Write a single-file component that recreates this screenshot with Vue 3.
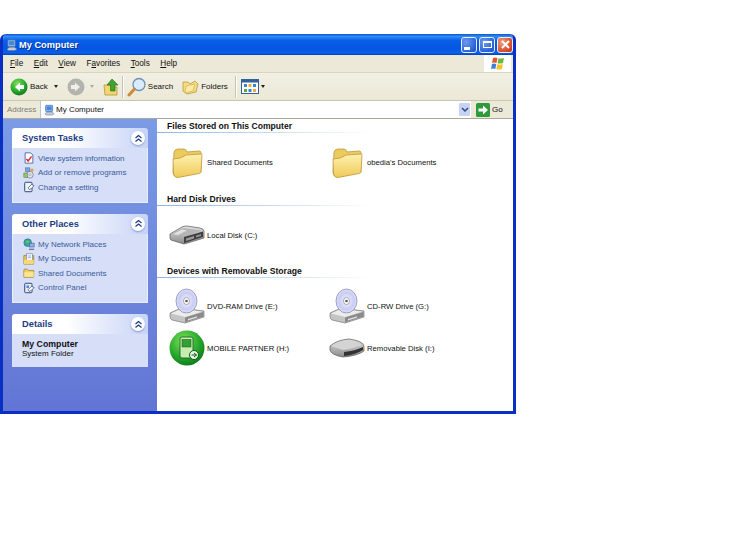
<template>
  <div class="page">
    <svg class="sprite" width="0" height="0">
      <defs>
        <linearGradient id="gFolder" x1="0" y1="0" x2="0" y2="1"><stop offset="0" stop-color="#fdf1ae" /><stop offset="1" stop-color="#f0ca58" /></linearGradient>
        <linearGradient id="gDrive" x1="0" y1="0" x2="0" y2="1"><stop offset="0" stop-color="#e2e2e2" /><stop offset="1" stop-color="#8a8a8a" /></linearGradient>
        <radialGradient id="gGreen" cx="0.4" cy="0.3" r="0.8"><stop offset="0" stop-color="#7fe05a" /><stop offset="0.6" stop-color="#22a52a" /><stop offset="1" stop-color="#0b6b1a" /></radialGradient>
        <radialGradient id="gDisc" cx="0.5" cy="0.5" r="0.6"><stop offset="0" stop-color="#f4f4ff" /><stop offset="0.6" stop-color="#c9ccf2" /><stop offset="1" stop-color="#eef0ff" /></radialGradient>

        <symbol id="i-folder" viewBox="0 0 36 36">
          <path d="M5 8 Q6 5 9 5 L15 5 Q17 5 18 8 L30 7 Q32 7 32 9 L32 28 L9 33 Q4 33 4 28 Z" fill="#ecca5c" stroke="#b5983c" stroke-width="0.8" />
          <path d="M4 15 Q12 15 17 11 L32.500 10 Q33 10 33 11 L32 28 Q32 29 30 29.500 L9 33.500 Q5 33.500 4.500 29 Z" fill="url(#gFolder)" stroke="#bd9c40" stroke-width="0.8" />
        </symbol>

        <symbol id="i-hdd" viewBox="0 0 36 20">
          <path d="M1 9 L13 2 Q15 1 18 1 L31 3 Q35 4 35 6 L35 13 L15 19 L2 15 Q1 14 1 12 Z" fill="url(#gDrive)" stroke="#555" stroke-width="0.7" />
          <path d="M2 9 L14 3 L33 5.500 L15 11.500 Z" fill="#b5b5b5" />
          <path d="M4 9 L13 4.500 L18 5.500 L9 10 Z" fill="#e0e0e0" />
          <path d="M15 12 L34 6.500 L34 12 L15 18 Z" fill="#3f3f3f" />
          <path d="M17 13.500 L25 11 L25 13.500 L17 16 Z" fill="#9a9a9a" />
          <path d="M27 10.500 L32 9 L32 11 L27 12.500 Z" fill="#8f8f8f" />
        </symbol>

        <symbol id="i-cd" viewBox="0 0 36 36">
          <path d="M1 25 L12 20 L35 23 L35 29 L16 35 L3 32 Q1 31 1 28 Z" fill="#c4c4c4" stroke="#666" stroke-width="0.6" />
          <path d="M2 25.500 L12 21 L33 23.500 L16 29 Z" fill="#ececec" />
          <path d="M16 29.500 L34.500 24 L34.500 28.500 L16 34.500 Z" fill="#8a8a8a" />
          <path d="M19 31 L28 28.300 L28 29.800 L19 32.500 Z" fill="#dcdcdc" />
          <ellipse cx="17.500" cy="13" rx="10.500" ry="12" fill="url(#gDisc)" stroke="#7f80a8" stroke-width="0.7" />
          <ellipse cx="17.500" cy="13" rx="3" ry="3.500" fill="#fff" stroke="#777" stroke-width="0.6" />
          <circle cx="17.500" cy="13" r="1.300" fill="#555" />
        </symbol>

        <symbol id="i-mobile" viewBox="0 0 36 36">
          <circle cx="18" cy="18" r="17.500" fill="url(#gGreen)" />
          <rect x="11" y="7" width="13" height="21" rx="2" fill="#c6ecb0" stroke="#0d5a18" stroke-width="0.8" />
          <rect x="13" y="9.500" width="9" height="7.500" fill="#32a032" stroke="#0d5a18" stroke-width="0.5" />
          <circle cx="25" cy="25" r="4.500" fill="#e9f8e0" stroke="#0d5a18" />
          <path d="M22.500 25 h5 M25 23 l2.500 2 l-2.500 2" fill="none" stroke="#0d5a18" />
        </symbol>

        <symbol id="i-removable" viewBox="0 0 36 20">
          <path d="M1 8 Q8 2 20 1 Q34 3 35 8 L35 13 Q28 18 14 19 Q2 17 1 12 Z" fill="url(#gDrive)" stroke="#555" stroke-width="0.7" />
          <path d="M2 8 Q8 3 20 2 L33 7 Q22 11 14 12 Z" fill="#d4d4d4" />
          <path d="M15 14 Q26 13 34 9 L34 12 Q26 17 15 18 Z" fill="#333" />
        </symbol>

        <symbol id="i-computer" viewBox="0 0 14 14">
          <rect x="2" y="1" width="9" height="8" rx="1" fill="#8fb2e8" stroke="#3d5f9c" stroke-width="0.8" />
          <rect x="3.500" y="2.500" width="6" height="4.500" fill="#3f8ae0" />
          <path d="M1 12 L4 9.500 H10 L13 12 L10 13.500 H3 Z" fill="#c3cbd8" stroke="#5d6f8c" stroke-width="0.6" />
        </symbol>

        <symbol id="i-sysinfo" viewBox="0 0 14 14">
          <path d="M2.500 1 H9 L11.500 3.500 V13 H2.500 Z" fill="#fff" stroke="#44609c" />
          <path d="M4 8 L6 10.500 L10 5" fill="none" stroke="#d8262c" stroke-width="1.600" />
        </symbol>

        <symbol id="i-addremove" viewBox="0 0 14 14">
          <circle cx="8" cy="9" r="4" fill="#dfe4ef" stroke="#667" stroke-width="0.7" />
          <circle cx="8" cy="9" r="1.200" fill="#fff" stroke="#667" stroke-width="0.5" />
          <rect x="3" y="1" width="5" height="4" fill="#77a8e0" stroke="#44609c" stroke-width="0.6" />
          <rect x="1" y="7" width="4" height="5" fill="#9ac467" stroke="#4d7a2c" stroke-width="0.6" />
          <circle cx="10.500" cy="3.500" r="1.800" fill="#e0a040" />
        </symbol>

        <symbol id="i-setting" viewBox="0 0 14 14">
          <rect x="2" y="1.500" width="8.500" height="11" rx="1" fill="#eef2fa" stroke="#27406f" stroke-width="1.100" />
          <path d="M6 8 L10 4 L13 5.500 L10 8.500 L7.500 10 Z" fill="#fff" stroke="#27406f" stroke-width="0.8" />
        </symbol>

        <symbol id="i-network" viewBox="0 0 14 14">
          <circle cx="5.500" cy="5.500" r="4.500" fill="#36a7a0" stroke="#1d5f7c" stroke-width="0.6" />
          <path d="M3 3.500 Q6 2 8 5 Q5 8 3 3.500" fill="#6cc45c" />
          <rect x="7.500" y="6" width="5.500" height="4.500" fill="#8fb2e8" stroke="#3d5f9c" stroke-width="0.7" />
          <path d="M7 13 H13" stroke="#556" stroke-width="1.200" />
        </symbol>

        <symbol id="i-mydocs" viewBox="0 0 14 14">
          <path d="M1 3 H12.500 V13 H1 Z" fill="#eec75e" stroke="#8f7428" stroke-width="0.8" />
          <rect x="4" y="1" width="7" height="9" fill="#fff" stroke="#5f7aa8" stroke-width="0.7" />
          <path d="M5.500 3.500 H9.500 M5.500 5.500 H9.500" stroke="#5f7aa8" stroke-width="0.7" />
          <path d="M1 8 H12.500 V13 H1 Z" fill="#f4d878" />
        </symbol>

        <symbol id="i-shared" viewBox="0 0 14 14">
          <path d="M1 4 L1.500 2.500 H5 L6.500 4 H12.500 V12 H1 Z" fill="#f2cf60" stroke="#96782c" stroke-width="0.8" />
          <path d="M1.500 6 H12.500 V11.500 H1.500 Z" fill="#fbe58e" />
        </symbol>

        <symbol id="i-control" viewBox="0 0 14 14">
          <rect x="2" y="1.500" width="8.500" height="11" rx="1" fill="#e6ecf8" stroke="#27406f" stroke-width="1.100" />
          <rect x="4" y="4" width="3" height="3" fill="#5b88c8" />
          <path d="M6 9 L10 5 L13 6.500 L10 9.500 L7.500 11 Z" fill="#fff" stroke="#27406f" stroke-width="0.8" />
        </symbol>
      </defs>
    </svg>

    <div class="window">
      <div class="titlebar">
        <svg class="title-icon"><use href="#i-computer" /></svg>
        <span class="title-text">My Computer</span>
        <div class="title-btns">
          <button class="win-btn"><span class="min-mark"></span></button>
          <button class="win-btn"><span class="max-mark"></span></button>
          <button class="win-btn close-btn">
            <svg width="11" height="11" viewBox="0 0 11 11"><path d="M2 2 L9 9 M9 2 L2 9" stroke="#fff" stroke-width="2" /></svg>
          </button>
        </div>
      </div>

      <div class="menubar">
        <div class="menus">
          <span v-for="m in menus" :key="m.pre + m.key + m.post">{{ m.pre }}<u>{{ m.key }}</u>{{ m.post }}</span>
        </div>
        <div class="flag-box">
          <svg width="16" height="16" viewBox="0 0 16 16">
            <path d="M3 2 Q5 1 7.500 2 L6.500 7 Q4 6 2 7 Z" fill="#e8562c" />
            <path d="M8.500 2.300 Q11 3 14 2 L13 7 Q10 8 7.500 7.300 Z" fill="#6cb83a" />
            <path d="M2 8 Q4 7 6.300 8 L5.300 13 Q3 12 1 13 Z" fill="#3f7fdc" />
            <path d="M7.300 8.300 Q10 9 12.800 8 L12 13 Q9 14 6.300 13.300 Z" fill="#f4c22e" />
          </svg>
        </div>
      </div>

      <div class="toolbar">
        <svg class="nav-icon" viewBox="0 0 18 18">
          <circle cx="9" cy="9" r="8.500" fill="url(#gGreen)" />
          <path d="M10 4.500 L5 9 L10 13.500 V11 H14 V7 H10 Z" fill="#fff" />
        </svg>
        <span class="tool-label back-label">Back</span>
        <span class="caret back-caret"></span>
        <svg class="nav-icon forward-icon" viewBox="0 0 18 18">
          <circle cx="9" cy="9" r="8.500" fill="#b4b4ae" />
          <path d="M8 4.500 L13 9 L8 13.500 V11 H4 V7 H8 Z" fill="#f0f0ea" />
        </svg>
        <span class="caret gray-caret"></span>
        <svg class="up-icon" viewBox="0 0 16 18">
          <path d="M1 7 H6 L8 9 H14 V17 H2 Z" fill="#f4d76c" stroke="#a88b32" stroke-width="0.7" />
          <path d="M9 1 L15 7 H12 V13 H7.500 V7 H4 Z" fill="#3fa52e" stroke="#1c6a1a" stroke-width="0.6" />
        </svg>
        <span class="tool-sep first-sep"></span>
        <svg class="search-icon" viewBox="0 0 20 20">
          <circle cx="12" cy="7.500" r="6" fill="#d8ecfb" stroke="#6e8fb4" stroke-width="1.300" />
          <path d="M7.500 12 L2 18" stroke="#c98a3c" stroke-width="3" stroke-linecap="round" />
        </svg>
        <span class="tool-label search-label">Search</span>
        <svg class="folders-icon" viewBox="0 0 17 17">
          <path d="M1 4 H6 L8 6 L13 3 L16 6 L14 14 L5 16 L1 13 Z" fill="#f6dc7e" stroke="#b99a3c" stroke-width="0.8" />
          <path d="M4 8 L13 6 L11 13 L3 15 Z" fill="#fbeaa6" stroke="#c8a848" stroke-width="0.6" />
        </svg>
        <span class="tool-label folders-label">Folders</span>
        <span class="tool-sep"></span>
        <svg class="views-icon" viewBox="0 0 18 15">
          <rect x="0.500" y="0.500" width="17" height="14" fill="#fff" stroke="#33609e" />
          <rect x="0.500" y="0.500" width="17" height="3" fill="#33609e" />
          <rect x="3" y="5" width="3" height="3" fill="#3b82d6" />
          <rect x="7.500" y="5" width="3" height="3" fill="#e8b02e" />
          <rect x="12" y="5" width="3" height="3" fill="#3b82d6" />
          <rect x="3" y="10" width="3" height="3" fill="#58a83a" />
          <rect x="7.500" y="10" width="3" height="3" fill="#3b82d6" />
          <rect x="12" y="10" width="3" height="3" fill="#e8b02e" />
        </svg>
        <span class="caret views-caret"></span>
      </div>

      <div class="addressbar">
        <span class="addr-label">Address</span>
        <div class="addr-input">
          <svg class="addr-icon"><use href="#i-computer" /></svg>
          <span>My Computer</span>
          <span class="addr-drop">
            <svg width="8" height="6" viewBox="0 0 8 6"><path d="M1 1 L4 4 L7 1" fill="none" stroke="#2d4a80" stroke-width="1.500" /></svg>
          </span>
        </div>
        <svg class="go-icon" viewBox="0 0 14 14">
          <rect width="14" height="14" rx="1.500" fill="#2f9a3c" />
          <path d="M2.500 5.500 H7 V2.500 L12 7 L7 11.500 V8.500 H2.500 Z" fill="#fff" />
        </svg>
        <span class="go-label">Go</span>
      </div>

      <div class="content">
        <aside class="sidebar">
          <section v-for="panel in linkPanels" :key="panel.title" class="panel">
            <header class="panel-head">
              <span>{{ panel.title }}</span>
              <span class="chevron">
                <svg width="9" height="9" viewBox="0 0 9 9"><path d="M1.500 4 L4.500 1.500 L7.500 4 M1.500 7.500 L4.500 5 L7.500 7.500" fill="none" stroke="#1c3c85" stroke-width="1.200" /></svg>
              </span>
            </header>
            <ul class="panel-links">
              <li v-for="link in panel.links" :key="link.label">
                <svg class="link-icon"><use :href="'#' + link.icon" /></svg>
                <span>{{ link.label }}</span>
              </li>
            </ul>
          </section>
          <section class="panel">
            <header class="panel-head">
              <span>Details</span>
              <span class="chevron">
                <svg width="9" height="9" viewBox="0 0 9 9"><path d="M1.500 4 L4.500 1.500 L7.500 4 M1.500 7.500 L4.500 5 L7.500 7.500" fill="none" stroke="#1c3c85" stroke-width="1.200" /></svg>
              </span>
            </header>
            <div class="details-body">
              <strong>My Computer</strong>
              <span>System Folder</span>
            </div>
          </section>
        </aside>

        <main class="files">
          <section v-for="group in groups" :key="group.title" class="group">
            <h3 class="group-title">{{ group.title }}</h3>
            <div class="tiles">
              <div v-for="tile in group.tiles" :key="tile.label" class="tile">
                <span class="tile-icon">
                  <svg :width="tile.w" :height="tile.h"><use :href="'#' + tile.icon" /></svg>
                </span>
                <span>{{ tile.label }}</span>
              </div>
            </div>
          </section>
        </main>
      </div>
    </div>
  </div>
</template>

<script setup>
const menus = [
  { pre: '', key: 'F', post: 'ile' },
  { pre: '', key: 'E', post: 'dit' },
  { pre: '', key: 'V', post: 'iew' },
  { pre: 'F', key: 'a', post: 'vorites' },
  { pre: '', key: 'T', post: 'ools' },
  { pre: '', key: 'H', post: 'elp' }
]

const linkPanels = [
  {
    title: 'System Tasks',
    links: [
      { icon: 'i-sysinfo', label: 'View system information' },
      { icon: 'i-addremove', label: 'Add or remove programs' },
      { icon: 'i-setting', label: 'Change a setting' }
    ]
  },
  {
    title: 'Other Places',
    links: [
      { icon: 'i-network', label: 'My Network Places' },
      { icon: 'i-mydocs', label: 'My Documents' },
      { icon: 'i-shared', label: 'Shared Documents' },
      { icon: 'i-control', label: 'Control Panel' }
    ]
  }
]

const groups = [
  {
    title: 'Files Stored on This Computer',
    tiles: [
      { icon: 'i-folder', label: 'Shared Documents', w: 36, h: 36 },
      { icon: 'i-folder', label: "obedia's Documents", w: 36, h: 36 }
    ]
  },
  {
    title: 'Hard Disk Drives',
    tiles: [{ icon: 'i-hdd', label: 'Local Disk (C:)', w: 36, h: 20 }]
  },
  {
    title: 'Devices with Removable Storage',
    tiles: [
      { icon: 'i-cd', label: 'DVD-RAM Drive (E:)', w: 36, h: 36 },
      { icon: 'i-cd', label: 'CD-RW Drive (G:)', w: 36, h: 36 },
      { icon: 'i-mobile', label: 'MOBILE PARTNER (H:)', w: 36, h: 36 },
      { icon: 'i-removable', label: 'Removable Disk (I:)', w: 36, h: 20 }
    ]
  }
]
</script>

<style>
html, body {
  margin: 0;
  background: #fff;
}
</style>

<style scoped>
.page {
  width: 750px;
  height: 552px;
  padding-top: 34px;
  box-sizing: border-box;
  background: #fff;
  font-family: "Liberation Sans", Arial, sans-serif;
  font-size: 8px;
  color: #111;
  overflow: hidden;
}
.sprite {
  position: absolute;
}
.window {
  width: 516px;
  height: 380px;
  box-sizing: border-box;
  display: flex;
  flex-direction: column;
  background: #ece9d8;
  border: 3px solid #0a2fc4;
  border-top: none;
  border-radius: 6px 6px 0 0;
  overflow: hidden;
}
.titlebar {
  height: 21px;
  margin: 0 -3px;
  padding: 0 3px 0 6px;
  display: flex;
  align-items: center;
  flex: none;
  background: linear-gradient(to bottom, #0a57d6 0%, #2f8cf5 12%, #0a5fe8 30%, #0555e0 70%, #0a62ea 90%, #0040bc 100%);
}
.title-icon {
  width: 12px;
  height: 12px;
  margin-right: 1px;
}
.title-text {
  color: #fff;
  font-weight: 700;
  font-size: 9.25px;
  text-shadow: 1px 1px 0 #0a2f90;
}
.title-btns {
  margin-left: auto;
  display: flex;
  gap: 2px;
}
.win-btn {
  width: 16px;
  height: 16px;
  padding: 0;
  display: flex;
  align-items: center;
  justify-content: center;
  border: 1px solid #e8eefc;
  border-radius: 3px;
  background: radial-gradient(circle at 30% 30%, #6f9cf0, #2a62d8 70%, #1f4fc0);
}
.close-btn {
  background: radial-gradient(circle at 30% 30%, #f0a080, #d8502c 65%, #b8341c);
}
.min-mark {
  width: 6px;
  height: 3px;
  background: #fff;
  align-self: flex-end;
  margin: 0 5px 2px 0;
}
.max-mark {
  width: 9px;
  height: 7px;
  border: 1px solid #fff;
  border-top-width: 2px;
  box-sizing: border-box;
}
.menubar {
  height: 18px;
  flex: none;
  display: flex;
  align-items: stretch;
  justify-content: space-between;
  border-bottom: 1px solid #d8d4c0;
  box-sizing: border-box;
  font-size: 8.2px;
}
.menus {
  display: flex;
  align-items: center;
  gap: 10.5px;
  padding-left: 7px;
}
.flag-box {
  width: 27px;
  margin-right: 2px;
  display: flex;
  align-items: center;
  justify-content: center;
  background: #fff;
}
.toolbar {
  height: 28px;
  flex: none;
  display: flex;
  align-items: center;
  padding-left: 7px;
  background: linear-gradient(to bottom, #f2f0e4, #ebe8d6);
  border-bottom: 1px solid #c9c6b4;
  box-sizing: border-box;
}
.nav-icon {
  width: 18px;
  height: 18px;
  flex: none;
}
.back-label {
  margin-left: 2px;
}
.caret {
  width: 0;
  height: 0;
  border-left: 2.5px solid transparent;
  border-right: 2.5px solid transparent;
  border-top: 3px solid #222;
}
.back-caret {
  margin-left: 6px;
}
.forward-icon {
  margin-left: 9px;
}
.gray-caret {
  margin-left: 5px;
  border-top-color: #aaa;
}
.up-icon {
  width: 16px;
  height: 18px;
  margin-left: 9px;
}
.tool-sep {
  width: 1px;
  height: 22px;
  margin: 0 5px 0 7px;
  background: #c5c2b0;
  box-shadow: 1px 0 0 #fff;
}
.first-sep {
  margin: 0 4px 0 3px;
}
.search-icon {
  width: 20px;
  height: 20px;
}
.search-label {
  margin-left: 1px;
}
.folders-icon {
  width: 17px;
  height: 17px;
  margin-left: 9px;
}
.folders-label {
  margin-left: 2px;
}
.views-icon {
  width: 18px;
  height: 15px;
}
.views-caret {
  margin-left: 2px;
}
.addressbar {
  height: 18px;
  flex: none;
  display: flex;
  align-items: center;
  padding-left: 4px;
  box-sizing: border-box;
  border-bottom: 1px solid #aca899;
}
.addr-label {
  width: 33px;
  color: #7f7c73;
}
.addr-input {
  width: 431px;
  height: 17px;
  padding-left: 3px;
  box-sizing: border-box;
  display: flex;
  align-items: center;
  background: #fff;
  border-left: 1px solid #b8c6dc;
}
.addr-icon {
  width: 11px;
  height: 12px;
  margin-right: 1px;
}
.addr-drop {
  width: 11px;
  height: 13px;
  margin-left: auto;
  margin-right: 1px;
  display: flex;
  align-items: center;
  justify-content: center;
  background: #c6d3f4;
  border-radius: 1px;
}
.go-icon {
  width: 14px;
  height: 14px;
  margin-left: 5px;
}
.go-label {
  margin-left: 2px;
}
.content {
  flex: 1;
  min-height: 0;
  display: flex;
  background: #fff;
}
.sidebar {
  width: 154px;
  flex: none;
  box-sizing: border-box;
  padding: 9px 9px 0;
  display: flex;
  flex-direction: column;
  gap: 11px;
  background: linear-gradient(to bottom, #7b9be6, #6275d5);
}
.panel-head {
  height: 20px;
  padding: 0 3px 0 10px;
  display: flex;
  align-items: center;
  justify-content: space-between;
  border-radius: 3px 3px 0 0;
  background: linear-gradient(to right, #fff 40%, #c6d3f7);
  color: #1c3c85;
  font-weight: 700;
  font-size: 9.3px;
}
.chevron {
  width: 14px;
  height: 14px;
  display: flex;
  align-items: center;
  justify-content: center;
  border-radius: 50%;
  background: #fff;
  box-shadow: 0 1px 2px #8a9ac8;
}
.panel-links {
  list-style: none;
  margin: 0;
  padding: 3px 0 7px 10px;
  background: #d6dff7;
  border: 1px solid #e8eefc;
  border-top: none;
  color: #3a5a9c;
}
.panel-links li {
  height: 14.6px;
  display: flex;
  align-items: center;
  gap: 3px;
}
.link-icon {
  width: 12px;
  height: 12px;
  flex: none;
}
.details-body {
  height: 33px;
  padding: 5px 0 0 10px;
  box-sizing: border-box;
  display: flex;
  flex-direction: column;
  background: #d6dff7;
  line-height: 10px;
}
.details-body strong {
  font-size: 8.75px;
}
.files {
  flex: 1;
  min-width: 0;
  font-size: 7.7px;
}
.group {
  padding-bottom: 12px;
}
.group + .group + .group {
  margin-top: -1px;
}
.group-title {
  margin: 0;
  height: 14px;
  box-sizing: border-box;
  padding-left: 10px;
  line-height: 14px;
  font-size: 8.6px;
  font-weight: 700;
  position: relative;
  color: #111;
}
.group-title::after {
  content: "";
  position: absolute;
  left: 0;
  bottom: 0;
  width: 215px;
  height: 1px;
  background: linear-gradient(to right, #8fb4e4, #fff);
}
.tiles {
  margin-top: 11px;
  display: grid;
  grid-template-columns: 160px 160px;
  grid-auto-rows: 36px;
  row-gap: 6px;
  padding-left: 12px;
}
.group + .group + .group .tiles {
  margin-top: 10px;
}
.tile {
  display: flex;
  align-items: center;
  gap: 2px;
}
.tile-icon {
  width: 36px;
  display: flex;
  align-items: center;
  justify-content: center;
}
.tile-icon svg {
  display: block;
}
</style>
